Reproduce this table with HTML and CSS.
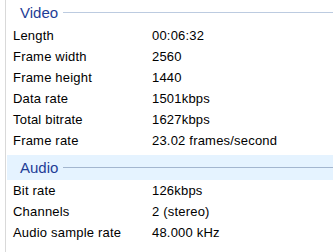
FILE: index.html
```html
<!DOCTYPE html>
<html lang="en">
<head>
    <meta charset="UTF-8">
    <meta name="viewport" content="width=device-width, initial-scale=1.0">
    <title>Properties - Details</title>
    <link rel="stylesheet" href="styles.css">
</head>
<body>
    <div id="details">
        <div class="group">
            <div class="group-header">
                <span>Video</span>
            </div>
            <div class="row"><span class="label">Length</span><span class="value">00:06:32</span></div>
            <div class="row"><span class="label">Frame width</span><span class="value">2560</span></div>
            <div class="row"><span class="label">Frame height</span><span class="value">1440</span></div>
            <div class="row"><span class="label">Data rate</span><span class="value">1501kbps</span></div>
            <div class="row"><span class="label">Total bitrate</span><span class="value">1627kbps</span></div>
            <div class="row"><span class="label">Frame rate</span><span class="value">23.02 frames/second</span></div>
        </div>
        <div class="group">
            <div class="group-header hot">
                <span>Audio</span>
            </div>
            <div class="row"><span class="label">Bit rate</span><span class="value">126kbps</span></div>
            <div class="row"><span class="label">Channels</span><span class="value">2 (stereo)</span></div>
            <div class="row"><span class="label">Audio sample rate</span><span class="value">48.000 kHz</span></div>
        </div>
    </div>
</body>
</html>
```

FILE: styles.css
```css
body {
    margin: 0;
    background-color: #ffffff;
    font-family: "Liberation Sans", Arial, sans-serif;
    font-size: 13px;
    color: #000000;
    height: 252px;
    overflow: hidden;
}

#details {
    margin-left: 5px;
    border-left: 1px solid #d9d9d9;
    height: 100%;
    padding-left: 1px;
}

.group + .group {
    margin-top: 4px;
}

.group-header {
    display: flex;
    align-items: center;
    gap: 5px;
    height: 25px;
    padding-left: 13px;
    font-size: 15px;
    color: #1e3d96;
}

.group-header::after {
    content: "";
    flex: 1;
    height: 1px;
    background-color: #bccbe0;
}

.group-header.hot {
    background-color: #e5f3ff;
}

.group-header.hot::after {
    background-color: #a3b6cf;
}

.row {
    display: grid;
    grid-template-columns: 139px 1fr;
    align-items: center;
    height: 21px;
    padding-left: 6px;
    letter-spacing: 0.2px;
    white-space: nowrap;
}
```
